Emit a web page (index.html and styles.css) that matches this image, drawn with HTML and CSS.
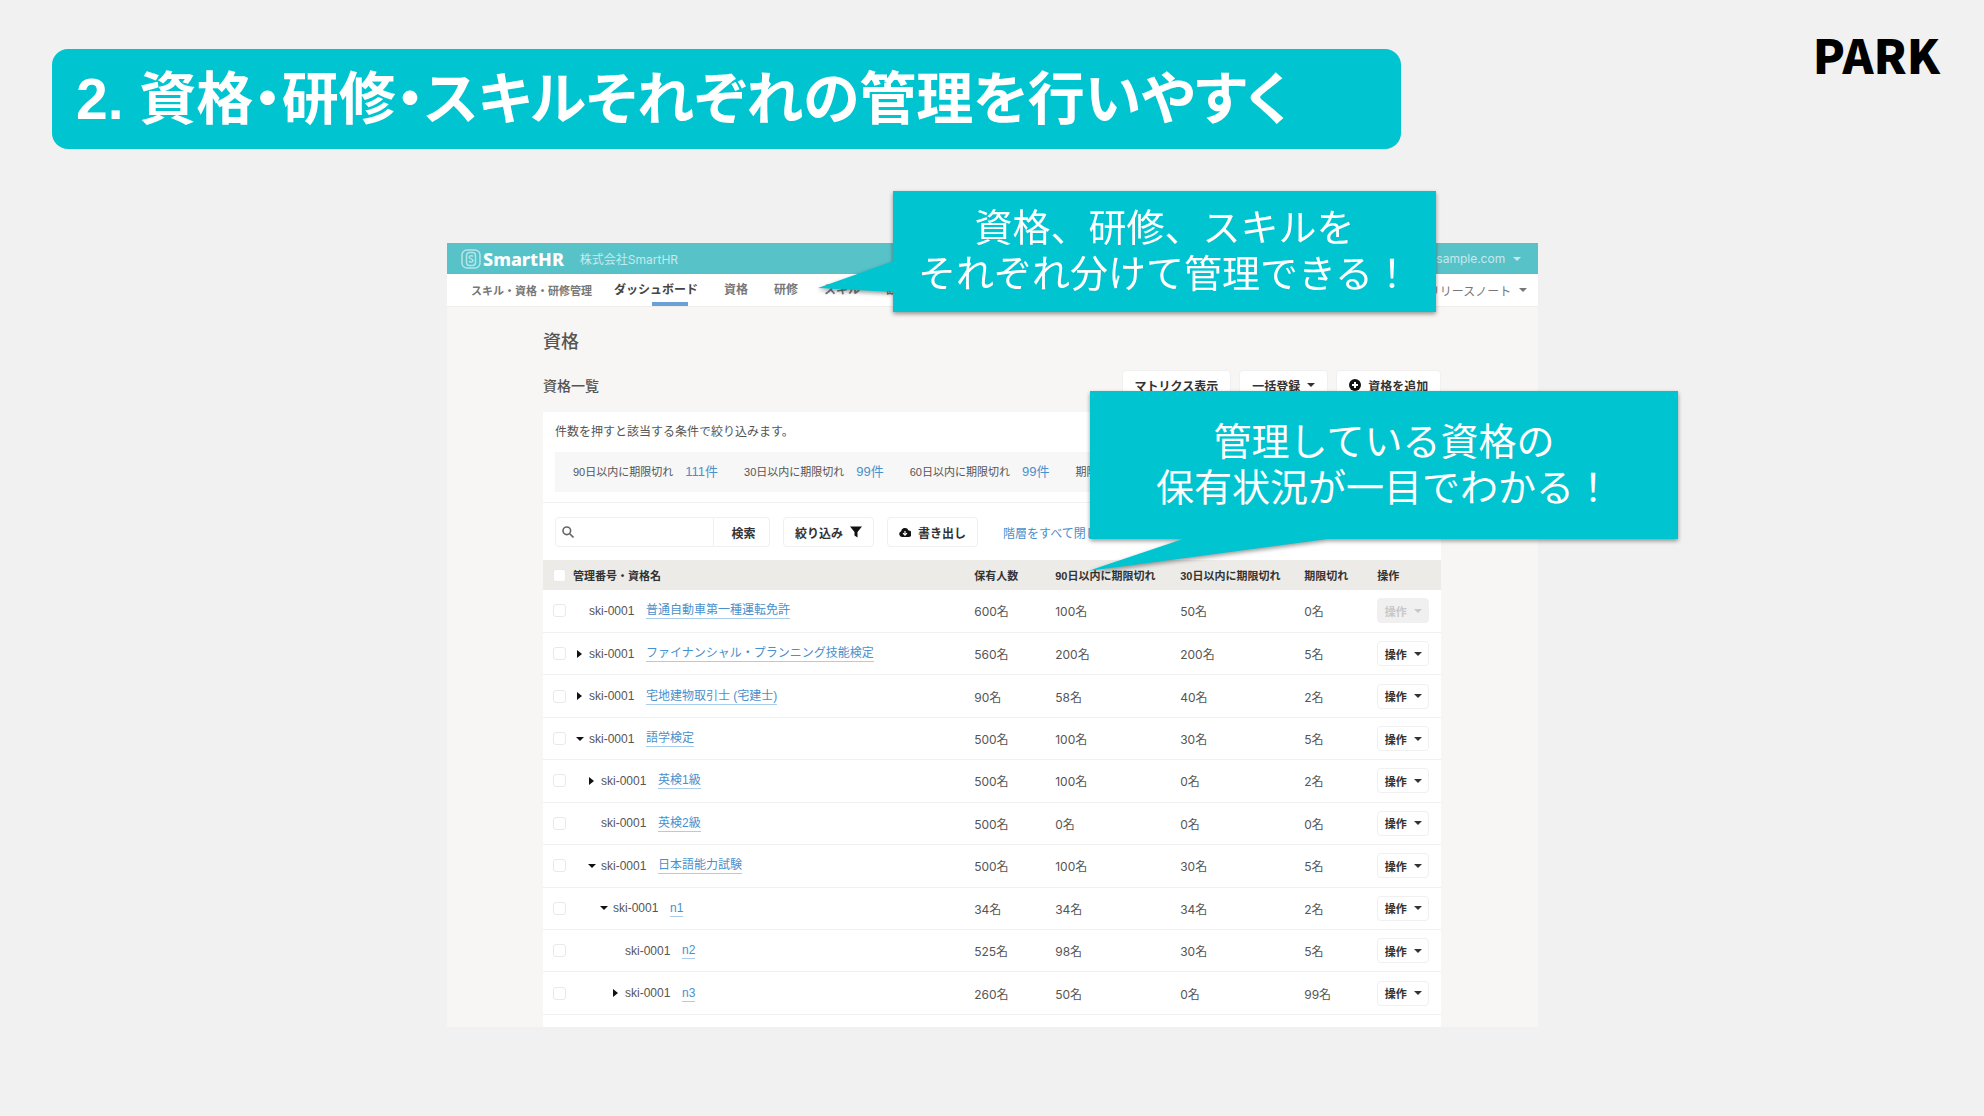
FILE: index.html
```
<!DOCTYPE html>
<html lang="ja">
<head>
  <meta charset="UTF-8">
  <meta name="viewport" content="width=device-width, initial-scale=1.0">
  <title>資格・研修・スキルそれぞれの管理を行いやすく</title>
  <link rel="stylesheet" href="styles.css">
</head>
<body>
  <header class="slide-header">
    <h1 class="slide-title">2. 資格・研修・スキルそれぞれの管理を行いやすく</h1>
    <div class="brand">PARK</div>
  </header>

  <main class="stage">
    <div class="app">
      <div class="app-bar">
        <svg class="app-logo" viewBox="0 0 20 20" fill="none" stroke="#b5e5e8" stroke-width="1.5">
          <rect x="1" y="1" width="18" height="18" rx="5"/>
          <rect x="5.5" y="3.5" width="9" height="13" rx="3"/>
          <path d="M12 7.5c-.6-1-3.800-1-3.800.8 0 1.800 3.800 1.300 3.800 3.200 0 1.800-3.400 1.800-4 .6"/>
        </svg>
        <span class="app-name">SmartHR</span>
        <span class="company">株式会社SmartHR</span>
        <button class="account">sample@sample.com <span class="caret"></span></button>
      </div>

      <nav class="app-nav">
        <span class="nav-title">スキル・資格・研修管理</span>
        <a href="#" class="nav-link active">ダッシュボード</a>
        <a href="#" class="nav-link">資格</a>
        <a href="#" class="nav-link">研修</a>
        <a href="#" class="nav-link">スキル</a>
        <a href="#" class="nav-link">設定</a>
        <button class="release">リリースノート <span class="caret"></span></button>
      </nav>

      <div class="content">
        <h2>資格</h2>
        <div class="list-head">
          <h3>資格一覧</h3>
          <button class="btn">マトリクス表示</button>
          <button class="btn">一括登録 <span class="caret"></span></button>
          <button class="btn">
            <svg class="icon" viewBox="0 0 12 12"><circle cx="6" cy="6" r="6"/><path d="M6 3v6M3 6h6" stroke="#fff" stroke-width="2"/></svg>
            資格を追加
          </button>
        </div>

        <div class="panel">
          <div class="summary">
            <p>件数を押すと該当する条件で絞り込みます。</p>
            <div class="counts">
              <span>90日以内に期限切れ<a href="#">111件</a></span>
              <span>30日以内に期限切れ<a href="#">99件</a></span>
              <span>60日以内に期限切れ<a href="#">99件</a></span>
              <span>期限切れ<a href="#">99件</a></span>
            </div>
          </div>

          <div class="toolbar">
            <div class="search">
              <svg class="search-icon" viewBox="0 0 12 12" fill="none" stroke="#666" stroke-width="1.600"><circle cx="4.800" cy="4.800" r="3.800"/><path d="M7.700 7.700l3.800 3.800"/></svg>
              <input type="text" aria-label="検索">
              <button class="btn">検索</button>
            </div>
            <button class="btn">
              絞り込み
              <svg class="icon" viewBox="0 0 12 12"><path d="M0 .5h12L7.500 6v5.500l-3-2V6z"/></svg>
            </button>
            <button class="btn">
              <svg class="icon" viewBox="0 0 12 12"><path d="M3 11a3 3 0 0 1-.8-5.800A3.800 3.800 0 0 1 9.500 4.600 3.200 3.200 0 0 1 9.300 11z"/><path d="M6 5v4M4 7.200l2 2 2-2" fill="none" stroke="#fff" stroke-width="1.200"/></svg>
              書き出し
            </button>
            <a href="#" class="toolbar-link">階層をすべて閉じる</a>
          </div>

          <table class="list">
            <thead>
              <tr>
                <th class="col-check"><input type="checkbox" aria-label="すべて選択"></th>
                <th>管理番号・資格名</th>
                <th class="col-total">保有人数</th>
                <th class="col-90">90日以内に期限切れ</th>
                <th class="col-30">30日以内に期限切れ</th>
                <th class="col-expired">期限切れ</th>
                <th class="col-action">操作</th>
              </tr>
            </thead>
            <tbody id="rows"></tbody>
          </table>
        </div>
      </div>
    </div>

    <div class="callout callout-nav">
      <svg class="tail" viewBox="0 0 76 31"><path d="M76 0L0 27l76 4z"/></svg>
      資格、研修、スキルを<br>それぞれ分けて管理できる！
    </div>
    <div class="callout callout-status">
      <svg class="tail" viewBox="0 0 247 33"><path d="M98 0L0 33 247 0z"/></svg>
      管理している資格の<br>保有状況が一目でわかる！
    </div>
  </main>

  <script>
    // level: 階層の深さ, state: open / closed / 空 (子なし)
    const skills = [
      { name: '普通自動車第一種運転免許', level: 0, state: '', nums: [600, 100, 50, 0], disabled: true },
      { name: 'ファイナンシャル・プランニング技能検定', level: 0, state: 'closed', nums: [560, 200, 200, 5] },
      { name: '宅地建物取引士 (宅建士)', level: 0, state: 'closed', nums: [90, 58, 40, 2] },
      { name: '語学検定', level: 0, state: 'open', nums: [500, 100, 30, 5] },
      { name: '英検1級', level: 1, state: 'closed', nums: [500, 100, 0, 2] },
      { name: '英検2級', level: 1, state: '', nums: [500, 0, 0, 0] },
      { name: '日本語能力試験', level: 1, state: 'open', nums: [500, 100, 30, 5] },
      { name: 'n1', level: 2, state: 'open', nums: [34, 34, 34, 2] },
      { name: 'n2', level: 3, state: '', nums: [525, 98, 30, 5] },
      { name: 'n3', level: 3, state: 'closed', nums: [260, 50, 0, 99] }
    ];

    document.getElementById('rows').innerHTML = skills.map(s => `
      <tr>
        <td><input type="checkbox" aria-label="${s.name}"></td>
        <td>
          <div class="name level-${s.level}">
            <span class="toggle">${s.state ? `<button class="${s.state}" aria-label="開閉"></button>` : ''}</span>
            <span class="code">ski-0001</span>
            <a href="#">${s.name}</a>
          </div>
        </td>
        ${s.nums.map(n => `<td class="num">${n}名</td>`).join('')}
        <td><button class="btn btn-small" ${s.disabled ? 'disabled' : ''}>操作 <span class="caret"></span></button></td>
      </tr>
    `).join('');
  </script>
</body>
</html>
```

FILE: styles.css
```
* {
  box-sizing: border-box;
}
body {
  margin: 0;
  background: #f1f1f1;
  font-family: "Liberation Sans", "Noto Sans CJK JP", sans-serif;
  font-size: 12px;
  color: #555;
}
h1, h2, h3, p {
  margin: 0;
}
button {
  font: inherit;
  color: inherit;
  border: none;
  background: none;
  padding: 0;
}
a {
  color: #4a90cc;
  text-decoration: none;
}

/* スライド見出し */
.slide-header {
  display: flex;
  justify-content: space-between;
  align-items: flex-start;
  padding: 19px 44px 0 52px;
}
.slide-title {
  width: 1349px;
  max-width: 80%;
  margin-top: 30px;
  padding: 0 24px;
  border-radius: 16px;
  background: #00c4cf;
  color: #fff;
  font-size: 57px;
  line-height: 100px;
  font-feature-settings: "palt";
  white-space: nowrap;
}
.brand {
  font-family: "Noto Sans CJK JP", sans-serif;
  font-weight: 900;
  font-size: 47px;
  line-height: 70px;
  color: #000;
}

.stage {
  position: relative;
  width: 55%;
  margin: 94px 0 0 447px;
}

/* アプリ画面 */
.app {
  background: #f7f6f4;
}
.app-bar {
  display: flex;
  align-items: center;
  height: 31px;
  padding: 0 17px 0 14px;
  background: #58c2c9;
  color: #c4eaed;
  font-family: Inter, "Noto Sans CJK JP", sans-serif;
}
.app-logo {
  width: 20px;
  height: 20px;
}
.app-name {
  margin: 0 16px 0 2px;
  font-family: "Noto Sans", sans-serif;
  font-weight: 800;
  font-size: 18px;
  color: #fff;
}
.account,
.release {
  display: flex;
  align-items: center;
  gap: 8px;
  margin-left: auto;
}
.caret {
  display: inline-block;
  border: 4px solid transparent;
  border-top: 4px solid currentColor;
  border-bottom: none;
}
.app-nav {
  display: flex;
  align-items: center;
  height: 33px;
  padding: 0 11px 0 24px;
  background: #fff;
  border-bottom: 1px solid #eeedea;
  font-weight: 700;
  color: #777;
}
.nav-title {
  margin-right: 22px;
  font-size: 11px;
}
.nav-link {
  margin-right: 26px;
  line-height: 32px;
  color: #777;
}
.nav-link.active {
  color: #444;
  background: linear-gradient(#6c9fd6, #6c9fd6) 38px 28px / 36px 4px no-repeat;
}
.release {
  font-weight: 400;
}

.content {
  padding: 25px 97px 0 96px;
}
h2 {
  font-size: 18px;
  line-height: 20px;
  font-weight: 500;
}
.list-head {
  display: flex;
  align-items: center;
  gap: 8px;
  margin: 18px 0 12px;
}
h3 {
  flex: 1;
  font-size: 14px;
  font-weight: 500;
}
.btn {
  display: flex;
  align-items: center;
  justify-content: center;
  gap: 7px;
  height: 30px;
  padding: 0 11px;
  border: 1px solid #f0f0f0;
  border-radius: 4px;
  background: #fff;
  color: #333;
  font-weight: 700;
  white-space: nowrap;
}
.list-head .btn {
  padding: 0 12px;
}
.icon {
  width: 12px;
  height: 12px;
  fill: #111;
}

.panel {
  background: #fff;
  padding-bottom: 12px;
}
.summary {
  padding: 11px 12px 10px;
  border-bottom: 1px solid #f1f1f1;
}
.summary p {
  line-height: 18px;
}
.counts {
  display: flex;
  gap: 26px;
  margin-top: 11px;
  padding: 0 18px;
  background: #f7f7f7;
  font-size: 11px;
  line-height: 39px;
  white-space: nowrap;
}
.counts a {
  margin-left: 12px;
  font-size: 13px;
}
.toolbar {
  display: flex;
  align-items: center;
  gap: 13px;
  padding: 14px 12px 13px;
}
.search {
  position: relative;
  display: flex;
}
.search-icon {
  position: absolute;
  left: 7px;
  top: 9px;
  width: 12px;
  height: 12px;
}
.search input {
  width: 159px;
  border: 1px solid #f0f0f0;
  border-radius: 4px 0 0 4px;
  padding-left: 26px;
}
.search .btn {
  width: 56px;
  padding-left: 15px;
  border-left: none;
  border-radius: 0 4px 4px 0;
}
.toolbar-link {
  margin-left: 12px;
}

/* 一覧 */
.list {
  width: 100%;
  height: 455px;
  table-layout: fixed;
  border-collapse: collapse;
}
.list th,
.list td {
  padding: 0;
  text-align: left;
  white-space: nowrap;
}
.list th {
  height: 30px;
  background: #ecebe8;
  color: #333;
  font-size: 11px;
}
.list td {
  height: 42px;
  border-bottom: 1px solid #f0f0f0;
}
.col-check { width: 30px; }
.col-total { width: 81px; }
.col-90 { width: 125px; }
.col-30 { width: 124px; }
.col-expired { width: 73px; }
.col-action { width: 64px; }
.list input {
  display: block;
  appearance: none;
  width: 13px;
  height: 13px;
  margin: 0 0 0 10px;
  border: 1px solid #e9e9e9;
  border-radius: 3px;
  background: #fff;
}
.name {
  display: flex;
  align-items: center;
}
.level-1 { padding-left: 12px; }
.level-2 { padding-left: 24px; }
.level-3 { padding-left: 36px; }
.name a {
  line-height: 16px;
  border-bottom: 1px solid #a9cdea;
}
.toggle {
  display: flex;
  width: 16px;
  padding-left: 3px;
}
.open {
  border: 4px solid transparent;
  border-top: 4px solid #111;
  border-bottom: none;
}
.closed {
  margin-left: 1px;
  border: 4px solid transparent;
  border-left: 5px solid #111;
  border-right: none;
}
.code {
  width: 57px;
}
.num {
  font-family: Inter, "Noto Sans CJK JP", sans-serif;
}
.btn-small {
  height: 25px;
  width: 52px;
  padding: 0;
  font-size: 11px;
}
.btn-small:disabled {
  background: #f0f0f0;
  color: #c8c8c8;
}

/* 吹き出し */
.callout {
  position: absolute;
  display: flex;
  align-items: center;
  justify-content: center;
  padding-bottom: 7px;
  background: #00c4cf;
  color: #fff;
  font-family: "Noto Sans CJK JP", sans-serif;
  font-size: 38px;
  line-height: 46px;
  text-align: center;
  white-space: nowrap;
  filter: drop-shadow(0 2px 2px rgba(0, 0, 0, 0.4));
}
.callout-nav {
  left: 446px;
  top: -52px;
  width: 543px;
  height: 121px;
}
.callout-status {
  left: 643px;
  top: 148px;
  width: 588px;
  height: 148px;
}
.tail {
  position: absolute;
  fill: #00c4cf;
}
.callout-nav .tail {
  left: -75px;
  top: 70px;
  width: 76px;
  height: 31px;
}
.callout-status .tail {
  left: -2px;
  top: 147px;
  width: 247px;
  height: 33px;
}
```
